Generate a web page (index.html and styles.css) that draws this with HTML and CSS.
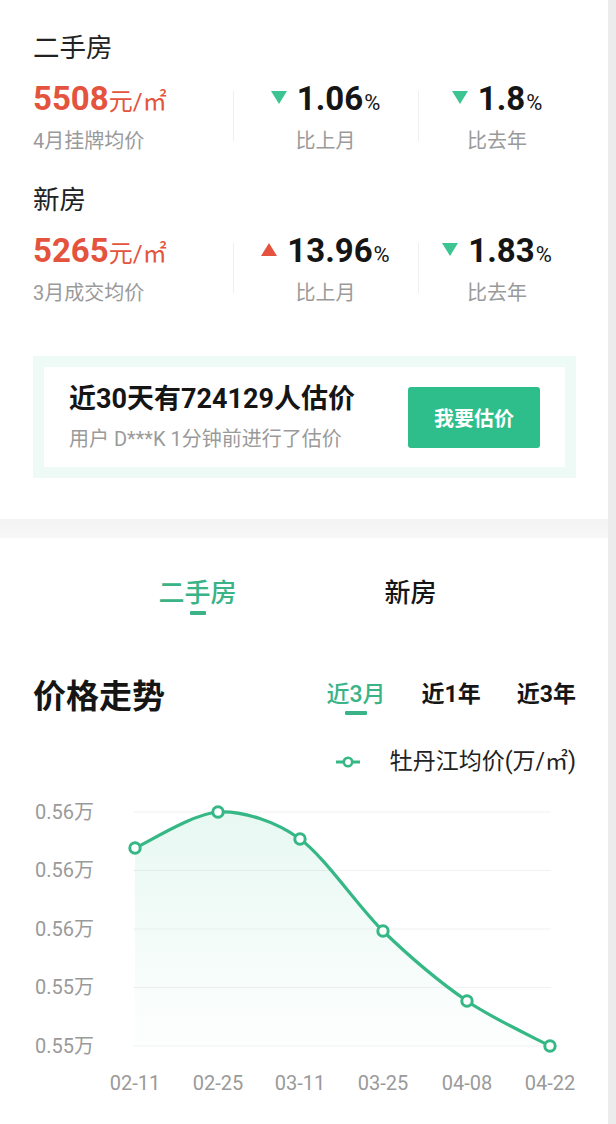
FILE: index.html
```html
<!DOCTYPE html>
<html lang="zh">
<head>
<meta charset="utf-8">
<title>房价</title>
<link rel="stylesheet" href="styles.css">
</head>
<body>
<div class="page">
  <div class="main">
    <section class="overview">
      <div class="block">
        <div class="block-title">二手房</div>
        <div class="stats">
          <div class="cell first">
            <div class="value red"><span class="num">5508</span><span class="unit">元/㎡</span></div>
            <div class="sub">4月挂牌均价</div>
          </div>
          <div class="cell">
            <div class="value"><span class="tri down"></span><span class="num">1.06</span><span class="pct">%</span></div>
            <div class="sub">比上月</div>
          </div>
          <div class="cell">
            <div class="value"><span class="tri down"></span><span class="num">1.8</span><span class="pct">%</span></div>
            <div class="sub">比去年</div>
          </div>
        </div>
      </div>
      <div class="block second">
        <div class="block-title">新房</div>
        <div class="stats">
          <div class="cell first">
            <div class="value red"><span class="num">5265</span><span class="unit">元/㎡</span></div>
            <div class="sub">3月成交均价</div>
          </div>
          <div class="cell">
            <div class="value"><span class="tri up"></span><span class="num">13.96</span><span class="pct">%</span></div>
            <div class="sub">比上月</div>
          </div>
          <div class="cell">
            <div class="value"><span class="tri down"></span><span class="num">1.83</span><span class="pct">%</span></div>
            <div class="sub">比去年</div>
          </div>
        </div>
      </div>
      <div class="card">
        <div class="card-inner">
          <div class="card-text">
            <div class="card-title">近30天有724129人估价</div>
            <div class="card-sub">用户 D***K 1分钟前进行了估价</div>
          </div>
          <div class="btn">我要估价</div>
        </div>
      </div>
    </section>
    <div class="band"></div>
    <section class="trend">
      <div class="tabs">
        <div class="tab active">二手房<span class="bar"></span></div>
        <div class="tab">新房</div>
      </div>
      <div class="trend-head">
        <div class="trend-title">价格走势</div>
        <div class="ranges">
          <div class="range active">近3月<span class="bar"></span></div>
          <div class="range">近1年</div>
          <div class="range">近3年</div>
        </div>
      </div>
      <div class="legend">
        <svg class="legend-icon" width="24" height="12" viewBox="0 0 24 12"><line x1="0" y1="6" x2="24" y2="6" stroke="#35b886" stroke-width="3"/><circle cx="12" cy="6" r="4.2" fill="#fff" stroke="#35b886" stroke-width="2.6"/></svg>
        <span>牡丹江均价(万/㎡)</span>
      </div>
      <svg class="chart" width="608" height="330" viewBox="0 794 608 330">
        <defs>
          <linearGradient id="fill" x1="0" y1="0" x2="0" y2="1">
            <stop offset="0" stop-color="#3cc595" stop-opacity="0.12"/>
            <stop offset="1" stop-color="#3cc595" stop-opacity="0.01"/>
          </linearGradient>
        </defs>
        <g class="grid" stroke="#f1f1f1" stroke-width="1">
          <line x1="133" y1="811" x2="551" y2="811"/>
          <line x1="133" y1="869.5" x2="551" y2="869.5"/>
          <line x1="133" y1="928" x2="551" y2="928"/>
          <line x1="133" y1="986.5" x2="551" y2="986.5"/>
          <line x1="133" y1="1045" x2="551" y2="1045"/>
        </g>
        <g class="ylab" font-size="20" fill="#9a9a9a">
          <text x="35" y="818">0.56万</text>
          <text x="35" y="876">0.56万</text>
          <text x="35" y="935">0.56万</text>
          <text x="35" y="993">0.55万</text>
          <text x="35" y="1052">0.55万</text>
        </g>
        <path d="M135,847 C147.5,841.6 193.3,812.4 218,811 C242.8,809.7 275.3,820.2 300,838 C324.8,855.9 358,905.7 383,930 C408.1,954.3 442,982.8 467,1000 C492,1017.3 537.6,1038.3 550,1045 L550,1045 L135,1045 Z" fill="url(#fill)"/>
        <path d="M135,847 C147.5,841.6 193.3,812.4 218,811 C242.8,809.7 275.3,820.2 300,838 C324.8,855.9 358,905.7 383,930 C408.1,954.3 442,982.8 467,1000 C492,1017.3 537.6,1038.3 550,1045" fill="none" stroke="#35b886" stroke-width="3.2"/>
        <g fill="#fff" stroke="#35b886" stroke-width="3">
          <circle cx="135" cy="847" r="5.2"/>
          <circle cx="218" cy="811" r="5.2"/>
          <circle cx="300" cy="838" r="5.2"/>
          <circle cx="383" cy="930" r="5.2"/>
          <circle cx="467" cy="1000" r="5.2"/>
          <circle cx="550" cy="1045" r="5.2"/>
        </g>
        <g class="xlab" font-size="20" fill="#9a9a9a" text-anchor="middle">
          <text x="135" y="1089">02-11</text>
          <text x="218" y="1089">02-25</text>
          <text x="300" y="1089">03-11</text>
          <text x="383" y="1089">03-25</text>
          <text x="467" y="1089">04-08</text>
          <text x="550" y="1089">04-22</text>
        </g>
      </svg>
    </section>
  </div>
  <div class="strip"></div>
</div>
</body>
</html>
```
FILE: styles.css
```css
html, body {
  margin: 0;
  padding: 0;
  background: #fff;
}
body {
  font-family: Roboto, "Noto Sans CJK SC", sans-serif;
  color: #1a1a1a;
}
.page {
  display: flex;
  width: 616px;
  height: 1124px;
  overflow: hidden;
}
.main {
  width: 608px;
  background: #fff;
}
.strip {
  width: 8px;
  background: #ececec;
}
.overview {
  padding: 32px 32px 41px 33px;
}
.block.second {
  margin-top: 31px;
}
.block-title {
  font-size: 26.5px;
  line-height: 32px;
  color: #222;
}
.stats {
  display: grid;
  grid-template-columns: 200px 185px 1fr;
  margin-top: 15px;
}
.cell {
  text-align: center;
  background: linear-gradient(#efefef, #efefef) left 12px / 1px 50px no-repeat;
}
.cell.first {
  text-align: left;
  background: none;
}
.value {
  height: 40px;
  line-height: 40px;
  white-space: nowrap;
  color: #151515;
}
.value.red {
  color: #e4533d;
}
.num {
  font-size: 33px;
  font-weight: 700;
}
.unit {
  font-size: 24px;
}
.pct {
  font-size: 22px;
  margin-left: 1px;
}
.tri {
  display: inline-block;
  width: 0;
  height: 0;
  margin-right: 10px;
  vertical-align: 6px;
  border-left: 8px solid transparent;
  border-right: 8px solid transparent;
}
.tri.down {
  border-top: 13px solid #3cc493;
}
.tri.up {
  border-bottom: 13px solid #e4533d;
}
.sub {
  margin-top: 10px;
  font-size: 20px;
  line-height: 24px;
  color: #9a9a9a;
}
.card {
  margin-top: 51px;
  border: 11px solid #eefaf5;
}
.card-inner {
  height: 100px;
  padding: 0 25px;
  display: flex;
  align-items: center;
  justify-content: space-between;
}
.card-title {
  font-size: 27px;
  font-weight: 700;
  line-height: 34px;
  color: #151515;
}
.card-sub {
  margin-top: 9px;
  font-size: 20px;
  line-height: 28px;
  color: #9a9a9a;
}
.btn {
  width: 132px;
  height: 61px;
  border-radius: 3px;
  background: #2ebe8b;
  color: #fff;
  font-size: 20px;
  font-weight: 700;
  display: flex;
  align-items: center;
  justify-content: center;
}
.band {
  height: 19px;
  background: linear-gradient(#f3f3f3, #f8f8f8);
}
.trend {
  padding-top: 39px;
}
.tabs {
  display: flex;
  justify-content: center;
}
.tab {
  width: 213px;
  display: flex;
  flex-direction: column;
  align-items: center;
  font-size: 26px;
  line-height: 32px;
  font-weight: 500;
  color: #151515;
}
.tab.active {
  color: #3ab386;
}
.bar {
  display: block;
  width: 16px;
  height: 4px;
  margin-top: 2px;
  border-radius: 1px;
  background: #3ab386;
}
.trend-head {
  margin-top: 62px;
  padding: 0 32px 0 33px;
  display: flex;
  justify-content: space-between;
  align-items: flex-start;
}
.trend-title {
  font-size: 33px;
  font-weight: 700;
  line-height: 40px;
  color: #151515;
}
.ranges {
  display: flex;
  gap: 36px;
  padding-top: 2px;
}
.range {
  display: flex;
  flex-direction: column;
  align-items: center;
  font-size: 23px;
  font-weight: 700;
  line-height: 32px;
  color: #151515;
}
.range.active {
  color: #3ab386;
  font-weight: 500;
}
.range .bar {
  width: 22px;
  margin-top: 0;
}
.legend {
  margin-top: 29px;
  padding-right: 32px;
  display: flex;
  justify-content: flex-end;
  align-items: center;
  gap: 30px;
  font-size: 23px;
  line-height: 32px;
  color: #222;
}
.legend-icon {
  display: block;
}
.chart {
  display: block;
  margin-top: 17px;
  font-family: Roboto, "Noto Sans CJK SC", sans-serif;
}
```
